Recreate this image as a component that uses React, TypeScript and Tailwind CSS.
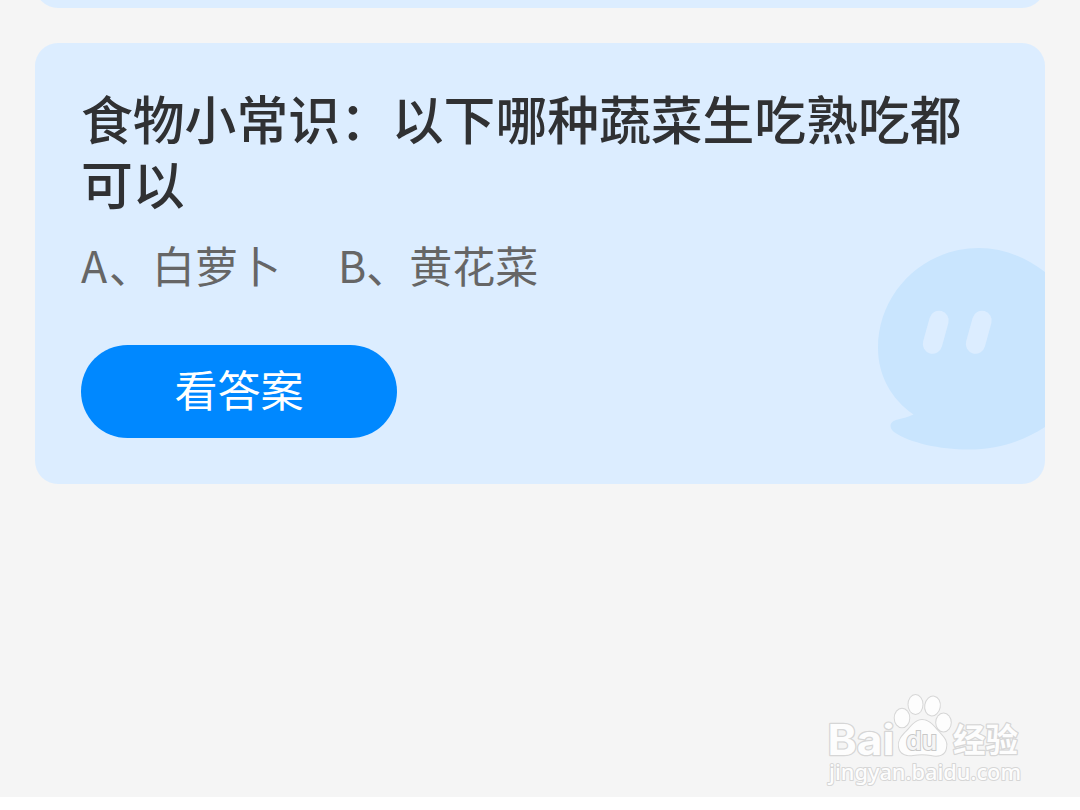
import React from 'react';

const options = [
  { key: 'A', label: '白萝卜' },
  { key: 'B', label: '黄花菜' },
];

const GhostBubble = () => (
  <svg
    className="absolute right-0 top-[204px]"
    width="168"
    height="204"
    viewBox="877 247 168 204"
    fill="none"
  >
    <path
      d="M1045 272C1025 257 1003 248 979 248C923 248 878 293 878 348C878 375 891 399 913.500 414.500C908 417 902 418.500 896 420C889 422 889 428 894 432C910 443 940 449.500 968 449.500C999 449.500 1023 441 1045 427Z"
      fill="#c9e5fe"
    />
    <path d="M939 320.500L932.500 344M982 320.500L975.500 344" stroke="#dcedff" strokeWidth="19.500" strokeLinecap="round" />
  </svg>
);

const Watermark = () => (
  <svg width="204" height="104" viewBox="824 688 204 104" className="[paint-order:stroke]">
    <g fill="#fdfdfd" stroke="#d6d6d6" strokeWidth="2.500" strokeLinejoin="round">
      <text x="827.500" y="754.500" textLength="67" lengthAdjust="spacingAndGlyphs" className="font-['Inter',sans-serif] text-[42px] font-bold">
        Bai
      </text>
      <g strokeWidth="2">
        <ellipse cx="902" cy="718" rx="7.300" ry="9.300" />
        <ellipse cx="915.500" cy="704.500" rx="7" ry="9.500" />
        <ellipse cx="932.500" cy="706" rx="7.300" ry="9.500" transform="rotate(10 932.500 706)" />
        <ellipse cx="943.500" cy="722.500" rx="7.300" ry="9" />
        <path d="M922 720C915 720 911 727 907 731C902 736 898 740 899 747C900 754 907 756 913 755C919 754 925 754 931 755C938 757 945 755 946 748C948 740 942 736 938 731C934 727 930 720 922 720Z" />
      </g>
      <text x="953" y="751.500" textLength="65" lengthAdjust="spacingAndGlyphs" className="font-['Noto_Sans_CJK_SC',sans-serif] text-[33px] font-bold">
        经验
      </text>
      <text x="829" y="780" textLength="192" lengthAdjust="spacingAndGlyphs" strokeWidth="2" className="font-['Noto_Sans',sans-serif] text-[22px] font-medium">
        jingyan.baidu.com
      </text>
    </g>
    <text
      x="906"
      y="749.500"
      textLength="31"
      lengthAdjust="spacingAndGlyphs"
      fill="#f5f5f5"
      stroke="#c8c8c8"
      strokeWidth="2"
      className="font-['Inter',sans-serif] text-[26px] font-semibold"
    >
      du
    </text>
  </svg>
);

const QuestionCard = () => (
  <section className="relative h-[441px] overflow-hidden rounded-[23px] bg-[#dcedff] px-[46px] pt-[42px]">
    <GhostBubble />
    <h2 className="w-[900px] text-[51.8px] font-medium leading-[65px] text-[#303133]">
      食物小常识：以下哪种蔬菜生吃熟吃都可以
    </h2>
    <div className="mt-[17px] flex gap-[57px] text-[43px] leading-[64px] text-[#666666]">
      {options.map((option) => (
        <span key={option.key} className="flex">
          <span className="min-w-7">{option.key}</span>、{option.label}
        </span>
      ))}
    </div>
    <button className="mt-[49px] flex h-[93px] w-[316px] items-center justify-center rounded-full bg-[#0088ff] pb-1.5 text-[43px] text-white">
      看答案
    </button>
  </section>
);

const App = () => {
  return (
    <div className="h-[810px] w-[1080px] overflow-hidden bg-white font-['Noto_Sans_CJK_SC',sans-serif]">
      <main className="flex h-[797px] flex-col bg-[#f5f5f5] px-[35px]">
        <div className="h-2 shrink-0 overflow-hidden">
          <div className="-mt-10 h-12 rounded-b-[23px] bg-[#dcedff]" />
        </div>
        <div className="mt-[35px]">
          <QuestionCard />
        </div>
        <footer className="-mr-[35px] mt-[204px] flex justify-end pr-[52px]">
          <Watermark />
        </footer>
      </main>
    </div>
  );
};

export default App;
